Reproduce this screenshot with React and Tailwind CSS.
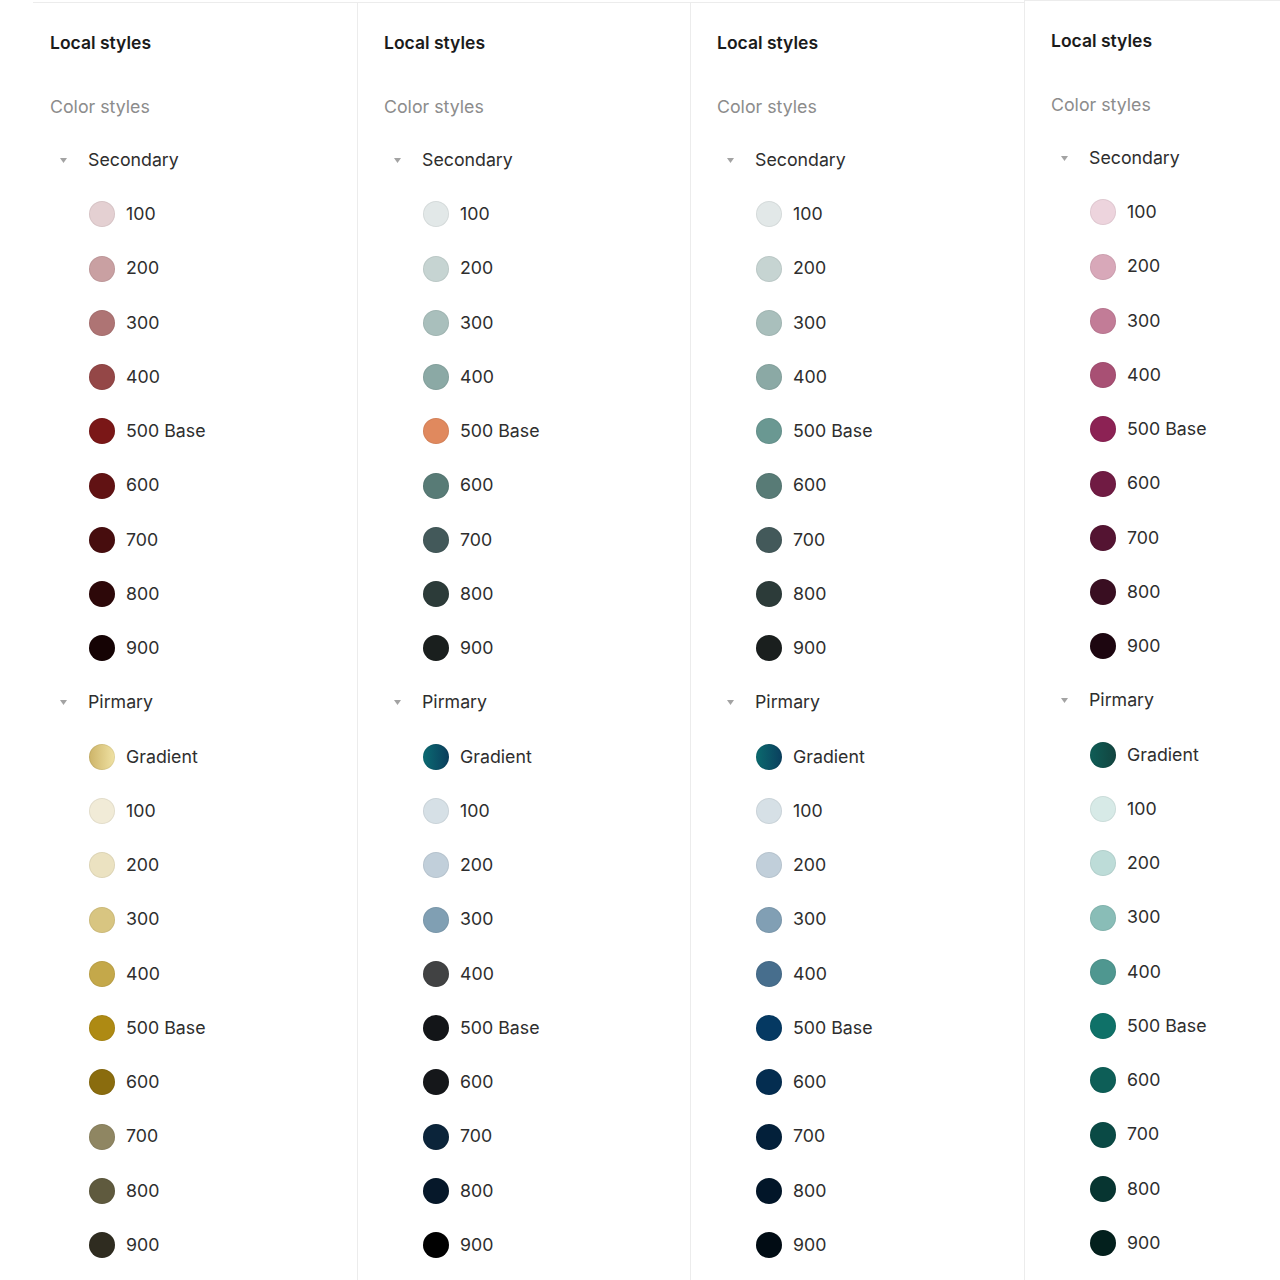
import React from 'react';

const columns = [
  {
    secondary: ['#e4d0d2', '#c9a0a2', '#ae7474', '#944747', '#7a1717', '#611213', '#470d0e', '#2d0809', '#150304'],
    gradient: 'linear-gradient(90deg, #cdb468 0%, #f0e2a4 100%)',
    primary: ['#f1ebd7', '#ebe2c1', '#d8c581', '#c4a84a', '#ae8a13', '#8a6c0e', '#8f8662', '#5f5a3e', '#2f2c20'],
  },
  {
    secondary: ['#e2e8e8', '#c6d4d2', '#a9bfbc', '#8ba9a5', '#e0895e', '#587b76', '#43595a', '#2c3b39', '#1a1f1e'],
    gradient: 'linear-gradient(90deg, #0b6b72 0%, #0a3d5c 100%)',
    primary: ['#d6e0e6', '#c1cfda', '#809fb3', '#414243', '#131518', '#15171a', '#0b243a', '#06182a', '#010101'],
  },
  {
    secondary: ['#e2e8e8', '#c6d4d2', '#a9bfbc', '#8ba9a5', '#6a9892', '#587b76', '#43595a', '#2c3b39', '#1a1f1e'],
    gradient: 'linear-gradient(90deg, #0b6a6e 0%, #0a3f5e 100%)',
    primary: ['#d6e0e6', '#c1cfda', '#819fb4', '#476e8d', '#053962', '#042d50', '#03203a', '#021629', '#010c14'],
  },
  {
    secondary: ['#edd4dd', '#d8a8b9', '#c27c97', '#a85074', '#8c2254', '#701b43', '#541432', '#390e21', '#1d0610'],
    gradient: 'linear-gradient(90deg, #0f5d56 0%, #12443f 100%)',
    primary: ['#d7eae7', '#bddcd8', '#89bdb7', '#4f9790', '#0f7168', '#0d5e57', '#0a4a45', '#073531', '#03201d'],
  },
];

const secondaryLabels = ['100', '200', '300', '400', '500 Base', '600', '700', '800', '900'];

function GroupHeader({ label }) {
  return (
    <div className="h-[54.25px] flex items-center">
      <div className="w-[38px] pl-[10px] flex items-center">
        <svg width="7" height="5" viewBox="0 0 7 5">
          <path d="M0 0 L7 0 L3.5 5 Z" fill="#a3a3a3" />
        </svg>
      </div>
      <span className="text-[17.75px] text-[#2e2e2e]">{label}</span>
    </div>
  );
}

function SwatchRow({ color, label }) {
  return (
    <div className="h-[54.25px] flex items-center pl-[39px] gap-[11px]">
      <div
        className="w-[26px] h-[26px] rounded-full shadow-[inset_0_0_0_1px_rgba(0,0,0,0.06)]"
        style={{ background: color }}
      />
      <span className="text-[17.75px] text-[#2e2e2e]">{label}</span>
    </div>
  );
}

function Column({ data, className }) {
  return (
    <div className={className}>
      <div className="mt-[13px] h-[54px] flex items-center text-[17.5px] font-semibold text-[#1b1b1b]">Local styles</div>
      <div className="mt-[11px] h-[52px] flex items-center text-[17.75px] text-[#8c8c8c]">Color styles</div>
      <GroupHeader label="Secondary" />
      {data.secondary.map((c, i) => (
        <SwatchRow key={'s' + i} color={c} label={secondaryLabels[i]} />
      ))}
      <GroupHeader label="Pirmary" />
      <SwatchRow color={data.gradient} label="Gradient" />
      {data.primary.map((c, i) => (
        <SwatchRow key={'p' + i} color={c} label={secondaryLabels[i]} />
      ))}
    </div>
  );
}

export default function App() {
  return (
    <div className="w-[1280px] h-[1280px] overflow-hidden bg-white flex pl-[33px] font-['Inter','Liberation_Sans',sans-serif]">
      <Column data={columns[0]} className="w-[324px] shrink-0 mt-[2px] border-t border-[#ececec] pl-[17px]" />
      <Column data={columns[1]} className="w-[333px] shrink-0 mt-[2px] border-t border-l border-[#ececec] pl-[26px]" />
      <Column data={columns[2]} className="w-[334px] shrink-0 mt-[2px] border-t border-l border-[#ececec] pl-[26px]" />
      <Column data={columns[3]} className="w-[340px] shrink-0 border-t border-l border-[#ececec] pl-[26px]" />
    </div>
  );
}
